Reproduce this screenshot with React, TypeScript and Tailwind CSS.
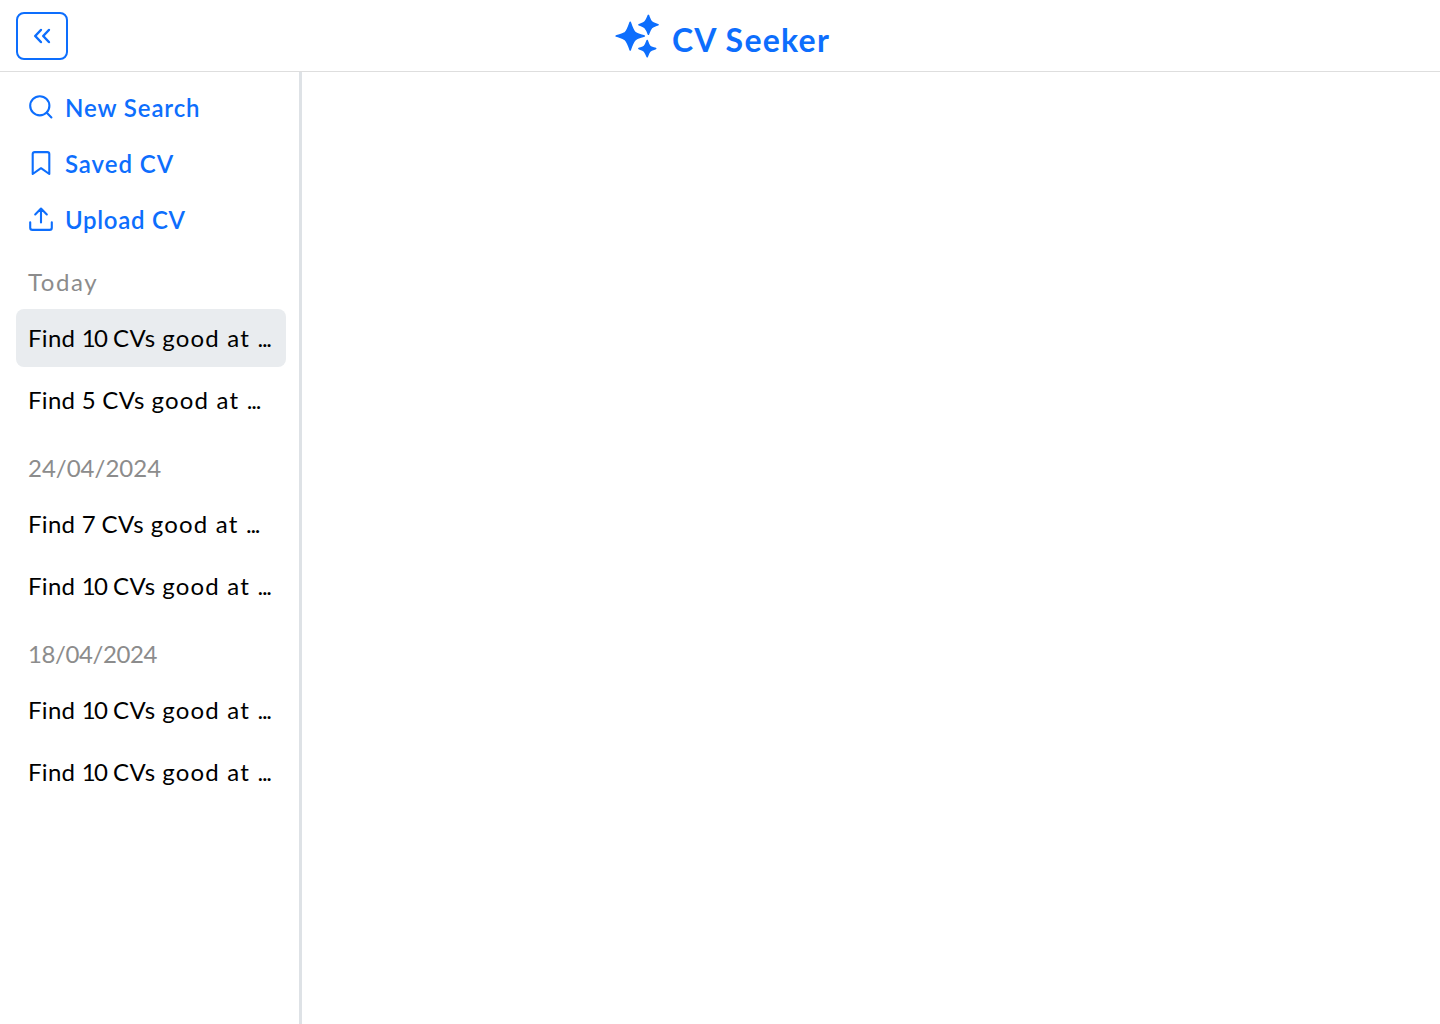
import type { ReactNode } from "react";

type Item = { count: string; countSpacing: string; active?: boolean };
type Group = { title: string; titleSpacing: string; items: Item[] };

const groups: Group[] = [
  {
    title: "Today",
    titleSpacing: "tracking-[1.6px]",
    items: [
      { count: "10", countSpacing: "tracking-[-1.6px]", active: true },
      { count: "5", countSpacing: "tracking-normal" },
    ],
  },
  {
    title: "24/04/2024",
    titleSpacing: "tracking-normal",
    items: [
      { count: "7", countSpacing: "tracking-[-0.8px]" },
      { count: "10", countSpacing: "tracking-[-1.6px]" },
    ],
  },
  {
    title: "18/04/2024",
    titleSpacing: "tracking-[-0.4px]",
    items: [
      { count: "10", countSpacing: "tracking-[-1.6px]" },
      { count: "10", countSpacing: "tracking-[-1.6px]" },
    ],
  },
];

function LineIcon({ children }: { children: ReactNode }) {
  return (
    <svg
      className="size-[26px] shrink-0"
      viewBox="0 0 26 26"
      fill="none"
      stroke="currentColor"
      strokeWidth="2.1"
      strokeLinecap="round"
      strokeLinejoin="round"
    >
      {children}
    </svg>
  );
}

function Logo() {
  return (
    <svg className="h-11 w-11 shrink-0" viewBox="0 0 44 44" fill="currentColor" stroke="currentColor" strokeWidth="1.6" strokeLinejoin="round">
      <path d="M15.2 8.2C16.8 13 18 16.5 20.2 18.6C22 20.3 25 20.6 29.3 22C25 23.5 22 23.9 20.2 25.7C18 28 16.8 31 15.2 36C13.6 31 12.4 28 10.2 25.7C8.2 23.9 5.5 23.4 1.2 22C5.5 20.6 8.2 20.3 10.2 18.6C12.4 16.5 13.6 13 15.2 8.2Z" />
      <path d="M33.4 1.4C34.6 4.5 35.2 6.5 36.6 7.8C38 9.1 40.2 9.6 43 10.7C40.2 11.8 38 12.4 36.6 13.8C35.2 15.2 34.6 17 33.4 20.2C32.2 17 31.4 15.2 30 13.8C28.6 12.4 26.6 11.8 24 10.7C26.6 9.6 28.6 9.1 30 7.8C31.4 6.5 32.2 4.5 33.4 1.4Z" />
      <path d="M32.2 26.5C33.2 29.4 33.7 31.2 34.9 32.3C36.1 33.4 38 33.7 40.7 34.6C38 35.5 36.1 36 34.9 37.1C33.7 38.3 33.2 40 32.2 42.7C31.2 40 30.5 38.3 29.3 37.1C28.1 36 26.4 35.5 23.9 34.6C26.4 33.7 28.1 33.4 29.3 32.3C30.5 31.2 31.2 29.4 32.2 26.5Z" />
    </svg>
  );
}

function MenuItem({ label, icon, spacing }: { label: string; icon: ReactNode; spacing: string }) {
  return (
    <button className="flex h-14 items-center pl-3 text-left">
      {icon}
      <span className={`ml-[11px] pt-px text-2xl leading-none font-semibold whitespace-nowrap ${spacing}`}>{label}</span>
    </button>
  );
}

export default function App() {
  return (
    <div className="flex h-screen flex-col overflow-hidden bg-white font-['Lato',sans-serif]">
      <header className="grid h-18 shrink-0 grid-cols-[1fr_auto_1fr] items-center border-b border-[#dedede] px-4 text-[#0d6efd]">
        <button aria-label="Collapse sidebar" className="flex h-12 w-13 items-center justify-center rounded-lg border-2 border-[#0d6efd]">
          <svg className="size-6" viewBox="0 0 24 24" fill="none" stroke="currentColor" strokeWidth="2.5" strokeLinecap="round" strokeLinejoin="round">
            <path d="M10.9 6L5.2 12L10.9 18M18.9 6L13.2 12L18.9 18" />
          </svg>
        </button>
        <div className="flex items-center gap-[13px] pl-[5px]">
          <Logo />
          <h1 className="pt-2 text-[32px] leading-10 font-bold tracking-[1.25px] whitespace-nowrap">CV Seeker</h1>
        </div>
      </header>
      <div className="flex min-h-0 flex-1">
        <aside className="w-[302px] shrink-0 border-r-3 border-[#dee2e6] pt-[7px] pr-[13px] pl-4">
          <nav className="flex flex-col text-[#0d6efd]">
            <MenuItem
              label="New Search"
              spacing="tracking-[0.9px]"
              icon={
                <LineIcon>
                  <circle cx="11.8" cy="11.8" r="9.6" />
                  <path d="M18.8 18.7L23.4 23.4" />
                </LineIcon>
              }
            />
            <MenuItem
              label="Saved CV"
              spacing="tracking-[0.95px]"
              icon={
                <LineIcon>
                  <path d="M4.7 24V4.1Q4.7 2.1 6.7 2.1H19.3Q21.3 2.1 21.3 4.1V24L13 18.2Z" />
                </LineIcon>
              }
            />
            <MenuItem
              label="Upload CV"
              spacing="tracking-[0.7px]"
              icon={
                <LineIcon>
                  <path d="M13 16.4V2.6M7.2 8.4L13 2.6L18.8 8.4M2.2 16.3V21.7Q2.2 23.9 4.4 23.9H21.6Q23.8 23.9 23.8 21.7V16.3" />
                </LineIcon>
              }
            />
          </nav>
          <div className="-mt-1">
            {groups.map((group) => (
              <section key={group.title}>
                <h2 className={`flex h-[66px] items-center pt-3 pl-3 text-2xl text-[#8c8c8c] ${group.titleSpacing}`}>{group.title}</h2>
                <div className="flex flex-col gap-1">
                  {group.items.map((item, i) => (
                    <button
                      key={i}
                      className={`h-[58px] rounded-lg pl-3 text-left text-2xl whitespace-nowrap text-black ${item.active ? "bg-[#e9ecef]" : ""}`}
                    >
                      <span className="tracking-[0.3px]">Find </span>
                      <span className={item.countSpacing}>{item.count}</span>
                      <span className="tracking-[0.5px]"> CVs </span>
                      <span className="tracking-[1.2px]">good at </span>
                      <span className="tracking-[-1.2px]">...</span>
                    </button>
                  ))}
                </div>
              </section>
            ))}
          </div>
        </aside>
        <main className="flex-1" />
      </div>
    </div>
  );
}
